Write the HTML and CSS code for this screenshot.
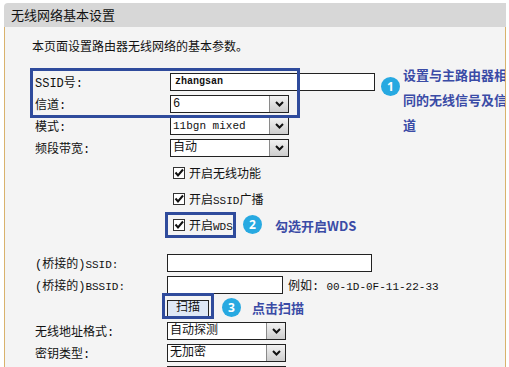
FILE: index.html
```
<!DOCTYPE html>
<html lang="zh-CN">
<head>
  <meta charset="UTF-8">
  <title>无线网络基本设置</title>
  <link rel="stylesheet" href="styles.css">
</head>
<body>

<div class="page">
  <div class="head">无线网络基本设置</div>

  <div class="panel">
    <p class="intro">本页面设置路由器无线网络的基本参数。</p>

    <div class="form">
      <div class="row">
        <span class="lab">SSID号:</span>
        <span class="txt val">zhangsan</span>
      </div>
      <div class="row">
        <span class="lab">信道:</span>
        <span class="sel"><span class="v">6</span><span class="arr"><svg width="9" height="6" viewBox="0 0 9 6"><path d="M1 1 L4.5 4.5 L8 1" /></svg></span></span>
      </div>
      <div class="row">
        <span class="lab">模式:</span>
        <span class="sel"><span class="v small">11bgn mixed</span><span class="arr"><svg width="9" height="6" viewBox="0 0 9 6"><path d="M1 1 L4.5 4.5 L8 1" /></svg></span></span>
      </div>
      <div class="row">
        <span class="lab">频段带宽:</span>
        <span class="sel"><span class="v">自动</span><span class="arr"><svg width="9" height="6" viewBox="0 0 9 6"><path d="M1 1 L4.5 4.5 L8 1" /></svg></span></span>
      </div>

      <div class="checks">
        <div class="row chk">
          <span class="lab"></span>
          <span class="box"><svg width="12" height="12" viewBox="0 0 12 12"><path d="M2.5 5.5 L5 8.5 L10 2.5" /></svg></span>
          <span>开启无线功能</span>
        </div>
        <div class="row chk">
          <span class="lab"></span>
          <span class="box"><svg width="12" height="12" viewBox="0 0 12 12"><path d="M2.5 5.5 L5 8.5 L10 2.5" /></svg></span>
          <span>开启<span class="small">SSID</span>广播</span>
        </div>
        <div class="row chk">
          <span class="lab"></span>
          <span class="box"><svg width="12" height="12" viewBox="0 0 12 12"><path d="M2.5 5.5 L5 8.5 L10 2.5" /></svg></span>
          <span>开启<span class="small">WDS</span></span>
        </div>
      </div>

      <div class="sub">
        <div class="row">
          <span class="lab">(桥接的)<span class="small">SSID:</span></span>
          <span class="txt"></span>
        </div>
        <div class="row">
          <span class="lab">(桥接的)<span class="small">BSSID:</span></span>
          <span class="txt short"></span>
          <span class="hint">例如: <span class="small">00-1D-0F-11-22-33</span></span>
        </div>
        <div class="row scan">
          <span class="lab"></span>
          <span class="btn">扫描</span>
        </div>
        <div class="row">
          <span class="lab">无线地址格式:</span>
          <span class="sel"><span class="v">自动探测</span><span class="arr"><svg width="9" height="6" viewBox="0 0 9 6"><path d="M1 1 L4.5 4.5 L8 1" /></svg></span></span>
        </div>
        <div class="row">
          <span class="lab">密钥类型:</span>
          <span class="sel"><span class="v">无加密</span><span class="arr"><svg width="9" height="6" viewBox="0 0 9 6"><path d="M1 1 L4.5 4.5 L8 1" /></svg></span></span>
        </div>
        <div class="row">
          <span class="lab">WEP密钥序号:</span>
          <span class="sel"><span class="v">1</span><span class="arr"><svg width="9" height="6" viewBox="0 0 9 6"><path d="M1 1 L4.5 4.5 L8 1" /></svg></span></span>
        </div>
      </div>
    </div>

    <!-- annotations over the form -->
    <div class="mark m1"></div>
    <div class="badge b1">1</div>
    <div class="note n1">设置与主路由器相同的无线信号及信道</div>

    <div class="mark m2"></div>
    <div class="badge b2">2</div>
    <div class="note n2">勾选开启WDS</div>

    <div class="mark m3"></div>
    <div class="badge b3">3</div>
    <div class="note n3">点击扫描</div>
  </div>
</div>

</body>
</html>
```

FILE: styles.css
```
body { margin: 0; background: #fff; font-family: "Liberation Mono", "Noto Sans CJK SC", monospace; font-size: 12px; color: #111; }
.page { width: 502px; margin-left: 4px; padding-top: 3px; }
.head { height: 24px; background: #d7d7d7; border-radius: 4px 0 0 0; padding-left: 7px; font: 13px/24px "Noto Sans CJK SC", sans-serif; color: #111; }
.panel { position: relative; overflow: hidden; height: 340px; box-sizing: border-box; background: #f4f4f4; border-left: 1px solid #d9b26c; border-right: 1px solid #d9b26c; padding: 11px 0 0 27px; }
.intro { margin: 0; line-height: 16px; font-family: "Noto Sans CJK SC", sans-serif; }
.form { margin: 17px 0 0 3px; }
.row { display: flex; align-items: center; height: 22px; white-space: nowrap; }
.lab { width: 135px; flex: none; }
.small { font-size: 11px; }

.txt { width: 205px; height: 18px; box-sizing: border-box; border: 1px solid #222; background: #fff; padding-left: 4px; line-height: 16px; }
.txt.val { font-size: 10px; font-weight: bold; }
.txt.short { width: 116px; }
.hint { margin-left: 5px; }

.sel { display: flex; width: 119px; height: 18px; box-sizing: border-box; border: 1px solid #222; background: #fff; }
.sel .v { flex: 1; padding-left: 2px; line-height: 16px; }
.sel .arr { width: 18px; display: flex; align-items: center; justify-content: center; background: linear-gradient(#f2f2f2, #cdcdcd); border-left: 1px solid #8a8a8a; }
.arr path { fill: none; stroke: #111; stroke-width: 2; }

.checks { margin-top: 1px; }
.row.chk { height: 26px; }
.box { width: 12px; height: 12px; box-sizing: border-box; border: 1px solid #333; background: #fff; margin: 0 4px 0 3px; display: flex; }
.box svg { margin: -1px; }
.box path { fill: none; stroke: #111; stroke-width: 2; }

.sub { margin-top: 14px; }
.sub .lab { width: 132px; }
.row.scan { height: 24px; }
.btn { width: 42px; height: 17px; box-sizing: border-box; border: 1px solid #222; background: #dfe8f5; text-align: center; line-height: 15px; }

.mark { position: absolute; box-sizing: border-box; border: 3px solid #2f4b9c; }
.m1 { left: 25px; top: 41px; width: 270px; height: 50px; }
.m2 { left: 160px; top: 185px; width: 71px; height: 26px; }
.m3 { left: 157px; top: 266px; width: 52px; height: 26px; }

.badge { position: absolute; width: 19px; height: 19px; border-radius: 50%; background: #27a9e1; color: #fff; font: bold 12px/19px "Noto Sans", sans-serif; text-align: center; }
.b1 { left: 376px; top: 50px; }
.b2 { left: 238px; top: 188px; }
.b3 { left: 217px; top: 271px; }

.note { position: absolute; font: bold 13px/25px "Noto Sans CJK SC", sans-serif; color: #3a4ba6; }
.n1 { left: 398px; top: 35px; width: 104px; }
.n2 { left: 270px; top: 186px; white-space: nowrap; }
.n3 { left: 247px; top: 268px; white-space: nowrap; }
```
